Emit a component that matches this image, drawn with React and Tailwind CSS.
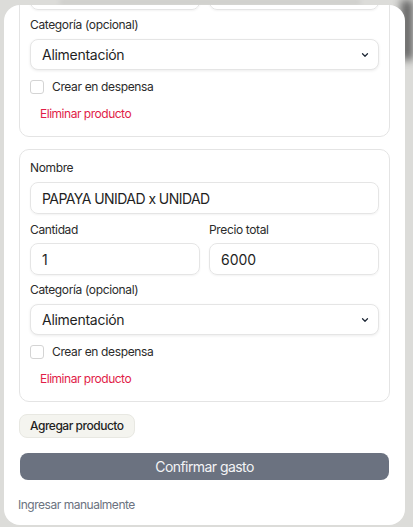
import { useState } from 'react';

const font = { fontFamily: 'Inter, "Noto Sans", sans-serif' };

const labelCls = 'block text-[12px] leading-4 text-[#2b2b2b] tracking-[-0.03em]';
const inputCls =
  'block h-[32px] w-full rounded-[8px] border border-[#e5e5e5] px-[11px] text-[14px] text-[#1f1f1f] shadow-[0_1px_2px_rgba(0,0,0,0.05)] outline-none';

const Chevron = () => (
  <svg
    className="pointer-events-none absolute right-[9px] top-1/2 -translate-y-1/2"
    width="10"
    height="10"
    viewBox="0 0 24 24"
    fill="none"
    stroke="#1f2937"
    strokeWidth="3"
    strokeLinecap="round"
    strokeLinejoin="round"
  >
    <path d="m6 9 6 6 6-6" />
  </svg>
);

// clipped: the card is scrolled up so only the bottom of its inputs row shows
const ProductCard = ({ product, clipped }) => {
  const [pantry, setPantry] = useState(false);

  return (
    <div className="rounded-[10px] border border-[#e4e4e4] bg-white px-[10px] pt-[10px] pb-[14px]">
      {!clipped && (
        <>
          <label className={labelCls}>Nombre</label>
          <input defaultValue={product.name} className={`mt-[6px] tracking-[-0.04em] ${inputCls}`} />
        </>
      )}

      <div className={`grid grid-cols-2 gap-[9px] ${clipped ? '' : 'mt-[8px]'}`}>
        <div>
          {!clipped && <label className={`mb-[5px] ${labelCls}`}>Cantidad</label>}
          <input defaultValue={product.qty} className={inputCls} />
        </div>
        <div>
          {!clipped && <label className={`mb-[5px] ${labelCls}`}>Precio total</label>}
          <input defaultValue={product.price} className={inputCls} />
        </div>
      </div>

      <label className={`mt-[7px] ${labelCls}`}>Categoría (opcional)</label>
      <div className="relative mt-[6px]">
        <select
          defaultValue={product.category}
          className="block h-[31px] w-full appearance-none rounded-[8px] border border-[#e5e5e5] bg-white px-[11px] text-[14px] text-[#1f1f1f] tracking-[-0.02em] shadow-[0_1px_3px_rgba(0,0,0,0.08)] outline-none"
        >
          <option>Alimentación</option>
          <option>Hogar</option>
          <option>Limpieza</option>
        </select>
        <Chevron />
      </div>

      <label className="mt-[9px] flex items-center gap-[8px] text-[12px] leading-4 text-[#2b2b2b] tracking-[-0.03em]">
        <input
          type="checkbox"
          checked={pantry}
          onChange={e => setPantry(e.target.checked)}
          className="h-[14px] w-[14px] appearance-none rounded-[3px] border border-[#d4d4d4] bg-white"
        />
        Crear en despensa
      </label>

      <button className="mt-[11px] block px-[10px] text-[12px] leading-4 text-[#e11d48] tracking-[-0.04em]">
        Eliminar producto
      </button>
    </div>
  );
};

export default function App() {
  const products = [
    { name: '', qty: '', price: '', category: 'Alimentación', clipped: true },
    { name: 'PAPAYA UNIDAD x UNIDAD', qty: '1', price: '6000', category: 'Alimentación' },
  ];

  return (
    <div className="relative h-[527px] overflow-hidden bg-[#dcdcd9]" style={font}>
      {/* blurred page behind the sheet */}
      <div className="absolute right-0 top-0 h-[60px] w-[12px] bg-[#5f5f5f] blur-[4px]" />
      <div className="absolute left-[60px] top-0 h-[4px] w-[300px] bg-[#c9c9c6] blur-[2px]" />

      <div className="relative ml-[4px] mr-[8px] mt-[5px] h-[520px] overflow-hidden rounded-[16px] bg-white px-[15px]">
        <div className="mt-[-38px] flex flex-col gap-[12px]">
          {products.map((p, i) => (
            <ProductCard key={i} product={p} clipped={p.clipped} />
          ))}
        </div>

        <button className="mt-[12px] rounded-[8px] border border-[#e8e8e2] bg-[#f4f4ef] px-[10px] py-[3px] text-[12px] leading-4 font-medium text-[#1f1f1f] tracking-[-0.04em]">
          Agregar producto
        </button>

        <button className="mt-[15px] ml-[1px] block h-[27px] w-[369px] rounded-[8px] bg-[#6b7280] text-[14px] text-[#f3f4f6] tracking-[-0.04em]">
          Confirmar gasto
        </button>

        <button className="mt-[17px] ml-[-1px] block text-[12px] leading-4 text-[#6b7280] tracking-[-0.04em]">
          Ingresar manualmente
        </button>
      </div>
    </div>
  );
}
